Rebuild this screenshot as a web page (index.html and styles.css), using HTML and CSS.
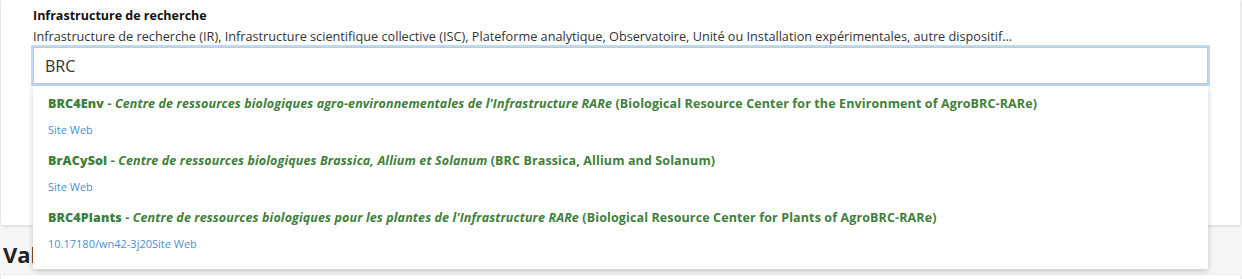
FILE: index.html
```html
<!doctype html>
<html lang="fr">
    <head>
        <meta charset="utf-8">
        <meta name="viewport" content="width=device-width, initial-scale=1">
        <title>Infrastructure de recherche</title>
        <link rel="stylesheet" href="styles.css">
    </head>
    <body>
        <div class="carte">
            <div class="champ">
                <label class="champ-titre" for="infra">Infrastructure de recherche</label>
                <p class="champ-aide">Infrastructure de recherche (IR), Infrastructure scientifique collective (ISC), Plateforme analytique, Observatoire, Unité ou Installation expérimentales, autre dispositif...</p>
                <div class="recherche">
                    <input type="text" id="infra" class="recherche-input" value="BRC">
                    <ul class="suggestions">
                        <li class="suggestion">
                            <div class="suggestion-titre"><b>BRC4Env</b> - <i>Centre de ressources biologiques agro-environnementales de l'Infrastructure RARe</i> (Biological Resource Center for the Environment of AgroBRC-RARe)</div>
                            <div class="suggestion-liens"><a href="#">Site Web</a></div>
                        </li>
                        <li class="suggestion">
                            <div class="suggestion-titre"><b>BrACySol</b> - <i>Centre de ressources biologiques Brassica, Allium et Solanum</i> (BRC Brassica, Allium and Solanum)</div>
                            <div class="suggestion-liens"><a href="#">Site Web</a></div>
                        </li>
                        <li class="suggestion">
                            <div class="suggestion-titre"><b>BRC4Plants</b> - <i>Centre de ressources biologiques pour les plantes de l'Infrastructure RARe</i> (Biological Resource Center for Plants of AgroBRC-RARe)</div>
                            <div class="suggestion-liens"><a href="#">10.17180/wn42-3j20</a><a href="#">Site Web</a></div>
                        </li>
                    </ul>
                </div>
            </div>
        </div>
        <h2 class="section-titre">Valorisation</h2>
        <div class="carte carte-suivante"></div>
    </body>
</html>
```

FILE: styles.css
```css
:root {
    --vert: #40803a;
    --bleu-lien: #4a8fd6;
    --texte: #333;
    --fond: #f6f6f6;
}

body {
    font-family: "Open Sans", "Noto Sans", sans-serif;
    margin: 0;
    padding: 0;
    background-color: var(--fond);
    color: var(--texte);
}

.carte {
    background-color: white;
    margin: 0 2px 0 1px;
    padding: 8px 32px 0 32px;
    height: 217px;
    box-shadow: 0 1px 3px rgba(0, 0, 0, 0.15);
}

.champ-titre {
    display: block;
    font-size: 12.5px;
    font-weight: bold;
    color: #111;
    line-height: 16px;
}

.champ-aide {
    margin: 4px 0 0 0;
    font-size: 12.7px;
    line-height: 16px;
    color: #333;
    white-space: nowrap;
}

.recherche {
    position: relative;
    margin-top: 3px;
    width: 1175px;
}

.recherche-input {
    display: block;
    box-sizing: border-box;
    width: 1175px;
    height: 37px;
    margin: 0;
    padding: 0 11px;
    border: 1px solid #c8c8c8;
    outline: 2px solid #bcd9f8;
    font-family: inherit;
    font-size: 16px;
    color: #333;
}

.suggestions {
    position: absolute;
    top: 39px;
    left: 0;
    width: 1175px;
    box-sizing: border-box;
    list-style: none;
    margin: 0;
    padding: 10px 15px 18px 15px;
    background-color: white;
    box-shadow: 0 2px 6px rgba(0, 0, 0, 0.2);
}

.suggestion {
    height: 57px;
}

.suggestion:last-child {
    height: auto;
}

.suggestion-titre {
    font-size: 12.5px;
    font-weight: bold;
    line-height: 16px;
    letter-spacing: 0.12px;
    color: var(--vert);
    white-space: nowrap;
}

.suggestion-titre b {
    font-weight: 800;
}

.suggestion-liens {
    margin-top: 11px;
    font-size: 11px;
    line-height: 14px;
}

.suggestion-liens a {
    color: var(--bleu-lien);
    text-decoration: none;
}

.section-titre {
    margin: 14px 0 0 3px;
    font-size: 22px;
    font-weight: bold;
    color: #222;
}

.carte-suivante {
    margin-top: 6px;
    height: 40px;
}
```
